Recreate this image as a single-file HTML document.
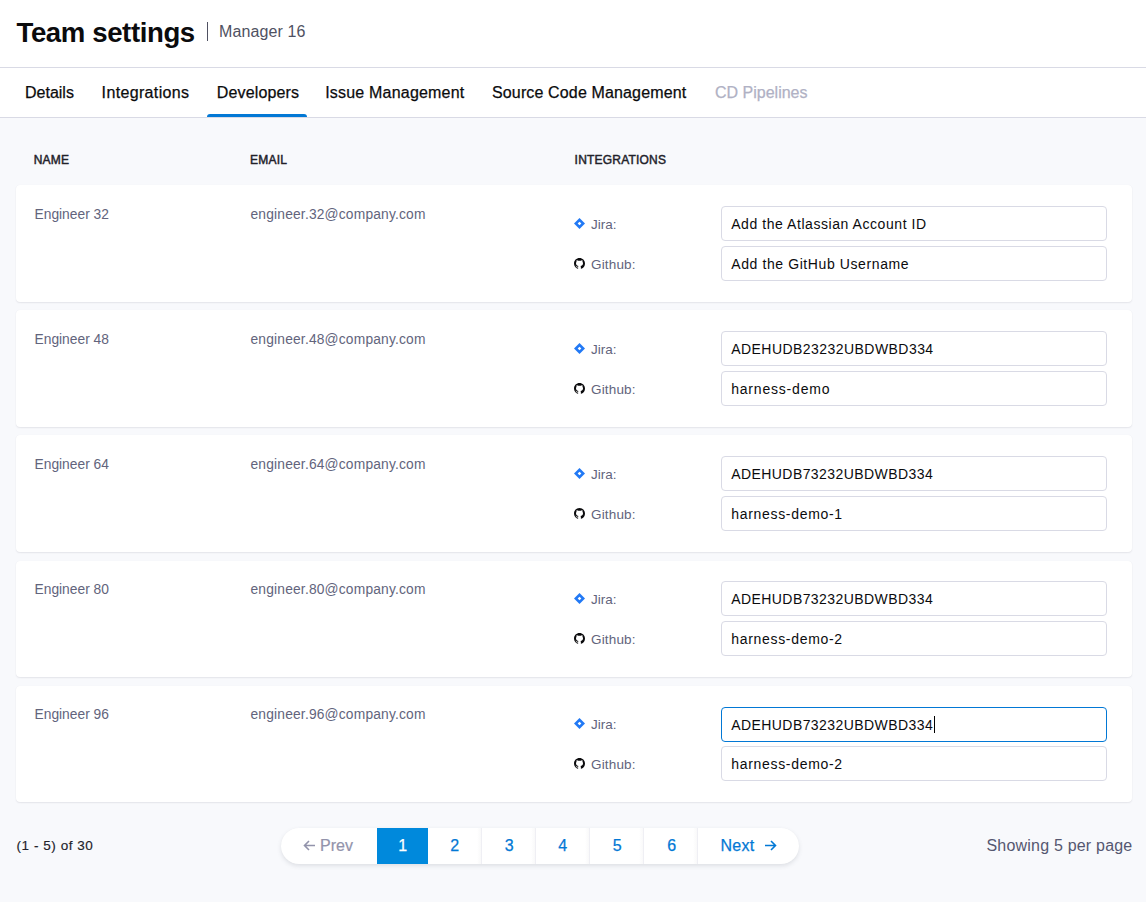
<!DOCTYPE html>
<html><head><meta charset="utf-8"><title>Team settings</title>
<style>
html,body{margin:0;padding:0;width:1146px;height:902px;overflow:hidden;background:#fff;}
body{position:relative;font-family:"Liberation Sans",sans-serif;}
.t{position:absolute;white-space:pre;}
.b{position:absolute;box-sizing:border-box;}
.card{background:#fff;border-radius:4px;box-shadow:0 0 1px rgba(40,41,61,0.06),0 1px 1.5px rgba(96,97,112,0.12);}
.inp{background:#fff;border:1px solid #d9dae5;border-radius:4px;}
.pag{background:#fff;border-radius:18px;box-shadow:0 0 1px rgba(40,41,61,0.04),0 2px 4px rgba(96,97,112,0.16);}
</style></head><body>
<div class="t" style="left:16.5px;top:18.64px;font-size:27.6px;line-height:27.6px;color:#0b0b0d;font-weight:bold;letter-spacing:-0.4px;">Team settings</div>
<div class="b" style="left:207px;top:22px;width:1px;height:19px;background:#4f5162"></div>
<div class="t" style="left:219px;top:24.46px;font-size:16px;line-height:16px;color:#4f5162;font-weight:normal;letter-spacing:0.1px;">Manager 16</div>
<div class="b" style="left:0;top:67px;width:1146px;height:1px;background:#d9dae5"></div>
<div class="b" style="left:0;top:117px;width:1146px;height:1px;background:#d9dae5"></div>
<div class="b" style="left:0;top:118px;width:1146px;height:784px;background:#f8f9fc"></div>
<div class="t" style="left:25px;top:85.46px;font-size:16px;line-height:16px;color:#0b0b0d;font-weight:normal;letter-spacing:0px;-webkit-text-stroke:0.25px #0b0b0d;">Details</div>
<div class="t" style="left:101.6px;top:85.46px;font-size:16px;line-height:16px;color:#0b0b0d;font-weight:normal;letter-spacing:0.35px;-webkit-text-stroke:0.25px #0b0b0d;">Integrations</div>
<div class="t" style="left:216.8px;top:85.46px;font-size:16px;line-height:16px;color:#0b0b0d;font-weight:normal;letter-spacing:0.15px;-webkit-text-stroke:0.25px #0b0b0d;">Developers</div>
<div class="t" style="left:325.2px;top:85.46px;font-size:16px;line-height:16px;color:#0b0b0d;font-weight:normal;letter-spacing:0.2px;-webkit-text-stroke:0.25px #0b0b0d;">Issue Management</div>
<div class="t" style="left:492px;top:85.46px;font-size:16px;line-height:16px;color:#0b0b0d;font-weight:normal;letter-spacing:0.14px;-webkit-text-stroke:0.25px #0b0b0d;">Source Code Management</div>
<div class="t" style="left:715px;top:85.46px;font-size:16px;line-height:16px;color:#b0b1c4;font-weight:normal;letter-spacing:0px;-webkit-text-stroke:0.25px #b0b1c4;">CD Pipelines</div>
<div class="b" style="left:207px;top:114px;width:100px;height:3px;background:#0278d5;border-radius:3px 3px 0 0"></div>
<div class="t" style="left:33.8px;top:153.84px;font-size:12px;line-height:12px;color:#22222a;font-weight:normal;letter-spacing:0.15px;-webkit-text-stroke:0.45px #22222a;">NAME</div>
<div class="t" style="left:250px;top:153.84px;font-size:12px;line-height:12px;color:#22222a;font-weight:normal;letter-spacing:0.25px;-webkit-text-stroke:0.45px #22222a;">EMAIL</div>
<div class="t" style="left:574.6px;top:153.84px;font-size:12px;line-height:12px;color:#22222a;font-weight:normal;letter-spacing:0.2px;-webkit-text-stroke:0.45px #22222a;">INTEGRATIONS</div>
<div class="b card" style="left:16px;top:185px;width:1116px;height:117px"></div>
<div class="t" style="left:34.5px;top:207.92px;font-size:13.8px;line-height:13.8px;color:#62647c;font-weight:normal;letter-spacing:0px;">Engineer 32</div>
<div class="t" style="left:250.5px;top:207.92px;font-size:13.8px;line-height:13.8px;color:#62647c;font-weight:normal;letter-spacing:0.18px;">engineer.32@company.com</div>
<svg class="b" style="left:574px;top:218px" width="11" height="11" viewBox="0 0 11 11"><path d="M5.5 0 L11 5.5 L5.5 11 L0 5.5Z" fill="#2279f5"/><path d="M5.5 3.7 L7.3 5.5 L5.5 7.3 L3.7 5.5Z" fill="#fff"/></svg>
<div class="t" style="left:591px;top:217.57px;font-size:13.5px;line-height:13.5px;color:#62647c;font-weight:normal;letter-spacing:0px;">Jira:</div>
<svg class="b" style="left:574px;top:258px" width="11" height="11" viewBox="0 0 16 16"><path fill="#0b0b0d" d="M8 0C3.58 0 0 3.58 0 8c0 3.54 2.29 6.53 5.47 7.59.4.07.55-.17.55-.38 0-.19-.01-.82-.01-1.49-2.01.37-2.53-.49-2.69-.94-.09-.23-.48-.94-.82-1.13-.28-.15-.68-.52-.01-.53.63-.01 1.08.58 1.23.82.72 1.21 1.87.87 2.33.66.07-.52.28-.87.51-1.07-1.78-.2-3.64-.89-3.640-3.95 0-.87.31-1.59.82-2.15-.08-.2-.36-1.02.08-2.120 0 0 .67-.21 2.2.82.64-.18 1.32-.27 2-.27.68 0 1.36.09 2 .27 1.53-1.04 2.2-.82 2.2-.82.44 1.1.16 1.92.08 2.12.51.56.82 1.27.82 2.15 0 3.07-1.87 3.75-3.65 3.95.29.25.54.73.54 1.48 0 1.07-.01 1.93-.01 2.2 0 .21.15.46.55.38A8.013 8.013 0 0016 8c0-4.42-3.58-8-8-8z"/></svg>
<div class="t" style="left:591px;top:257.57px;font-size:13.5px;line-height:13.5px;color:#62647c;font-weight:normal;letter-spacing:0.17px;">Github:</div>
<div class="b inp" style="left:721px;top:206px;width:386px;height:35px;border-color:#d9dae5"></div>
<div class="t" style="left:731.2px;top:217.15px;font-size:14px;line-height:14px;color:#0b0b0d;font-weight:normal;letter-spacing:0.56px;">Add the Atlassian Account ID</div>
<div class="b inp" style="left:721px;top:246px;width:386px;height:35px"></div>
<div class="t" style="left:731.2px;top:257.15px;font-size:14px;line-height:14px;color:#0b0b0d;font-weight:normal;letter-spacing:0.6px;">Add the GitHub Username</div>
<div class="b card" style="left:16px;top:310px;width:1116px;height:117px"></div>
<div class="t" style="left:34.5px;top:332.92px;font-size:13.8px;line-height:13.8px;color:#62647c;font-weight:normal;letter-spacing:0px;">Engineer 48</div>
<div class="t" style="left:250.5px;top:332.92px;font-size:13.8px;line-height:13.8px;color:#62647c;font-weight:normal;letter-spacing:0.18px;">engineer.48@company.com</div>
<svg class="b" style="left:574px;top:343px" width="11" height="11" viewBox="0 0 11 11"><path d="M5.5 0 L11 5.5 L5.5 11 L0 5.5Z" fill="#2279f5"/><path d="M5.5 3.7 L7.3 5.5 L5.5 7.3 L3.7 5.5Z" fill="#fff"/></svg>
<div class="t" style="left:591px;top:342.57px;font-size:13.5px;line-height:13.5px;color:#62647c;font-weight:normal;letter-spacing:0px;">Jira:</div>
<svg class="b" style="left:574px;top:383px" width="11" height="11" viewBox="0 0 16 16"><path fill="#0b0b0d" d="M8 0C3.58 0 0 3.58 0 8c0 3.54 2.29 6.53 5.47 7.59.4.07.55-.17.55-.38 0-.19-.01-.82-.01-1.49-2.01.37-2.53-.49-2.69-.94-.09-.23-.48-.94-.82-1.13-.28-.15-.68-.52-.01-.53.63-.01 1.08.58 1.23.82.72 1.21 1.87.87 2.33.66.07-.52.28-.87.51-1.07-1.78-.2-3.64-.89-3.640-3.95 0-.87.31-1.59.82-2.15-.08-.2-.36-1.02.08-2.120 0 0 .67-.21 2.2.82.64-.18 1.32-.27 2-.27.68 0 1.36.09 2 .27 1.53-1.04 2.2-.82 2.2-.82.44 1.1.16 1.92.08 2.12.51.56.82 1.27.82 2.15 0 3.07-1.87 3.75-3.65 3.95.29.25.54.73.54 1.48 0 1.07-.01 1.93-.01 2.2 0 .21.15.46.55.38A8.013 8.013 0 0016 8c0-4.42-3.58-8-8-8z"/></svg>
<div class="t" style="left:591px;top:382.57px;font-size:13.5px;line-height:13.5px;color:#62647c;font-weight:normal;letter-spacing:0.17px;">Github:</div>
<div class="b inp" style="left:721px;top:331px;width:386px;height:35px;border-color:#d9dae5"></div>
<div class="t" style="left:731.2px;top:342.15px;font-size:14px;line-height:14px;color:#0b0b0d;font-weight:normal;letter-spacing:0.45px;">ADEHUDB23232UBDWBD334</div>
<div class="b inp" style="left:721px;top:371px;width:386px;height:35px"></div>
<div class="t" style="left:731.2px;top:382.15px;font-size:14px;line-height:14px;color:#0b0b0d;font-weight:normal;letter-spacing:0.8px;">harness-demo</div>
<div class="b card" style="left:16px;top:435px;width:1116px;height:117px"></div>
<div class="t" style="left:34.5px;top:457.92px;font-size:13.8px;line-height:13.8px;color:#62647c;font-weight:normal;letter-spacing:0px;">Engineer 64</div>
<div class="t" style="left:250.5px;top:457.92px;font-size:13.8px;line-height:13.8px;color:#62647c;font-weight:normal;letter-spacing:0.18px;">engineer.64@company.com</div>
<svg class="b" style="left:574px;top:468px" width="11" height="11" viewBox="0 0 11 11"><path d="M5.5 0 L11 5.5 L5.5 11 L0 5.5Z" fill="#2279f5"/><path d="M5.5 3.7 L7.3 5.5 L5.5 7.3 L3.7 5.5Z" fill="#fff"/></svg>
<div class="t" style="left:591px;top:467.57px;font-size:13.5px;line-height:13.5px;color:#62647c;font-weight:normal;letter-spacing:0px;">Jira:</div>
<svg class="b" style="left:574px;top:508px" width="11" height="11" viewBox="0 0 16 16"><path fill="#0b0b0d" d="M8 0C3.58 0 0 3.58 0 8c0 3.54 2.29 6.53 5.47 7.59.4.07.55-.17.55-.38 0-.19-.01-.82-.01-1.49-2.01.37-2.53-.49-2.69-.94-.09-.23-.48-.94-.82-1.13-.28-.15-.68-.52-.01-.53.63-.01 1.08.58 1.23.82.72 1.21 1.87.87 2.33.66.07-.52.28-.87.51-1.07-1.78-.2-3.64-.89-3.640-3.95 0-.87.31-1.59.82-2.15-.08-.2-.36-1.02.08-2.120 0 0 .67-.21 2.2.82.64-.18 1.32-.27 2-.27.68 0 1.36.09 2 .27 1.53-1.04 2.2-.82 2.2-.82.44 1.1.16 1.92.08 2.12.51.56.82 1.27.82 2.15 0 3.07-1.87 3.75-3.65 3.95.29.25.54.73.54 1.48 0 1.07-.01 1.93-.01 2.2 0 .21.15.46.55.38A8.013 8.013 0 0016 8c0-4.42-3.58-8-8-8z"/></svg>
<div class="t" style="left:591px;top:507.57px;font-size:13.5px;line-height:13.5px;color:#62647c;font-weight:normal;letter-spacing:0.17px;">Github:</div>
<div class="b inp" style="left:721px;top:456px;width:386px;height:35px;border-color:#d9dae5"></div>
<div class="t" style="left:731.2px;top:467.15px;font-size:14px;line-height:14px;color:#0b0b0d;font-weight:normal;letter-spacing:0.43px;">ADEHUDB73232UBDWBD334</div>
<div class="b inp" style="left:721px;top:496px;width:386px;height:35px"></div>
<div class="t" style="left:731.2px;top:507.15px;font-size:14px;line-height:14px;color:#0b0b0d;font-weight:normal;letter-spacing:0.69px;">harness-demo-1</div>
<div class="b card" style="left:16px;top:561px;width:1116px;height:116px"></div>
<div class="t" style="left:34.5px;top:582.92px;font-size:13.8px;line-height:13.8px;color:#62647c;font-weight:normal;letter-spacing:0px;">Engineer 80</div>
<div class="t" style="left:250.5px;top:582.92px;font-size:13.8px;line-height:13.8px;color:#62647c;font-weight:normal;letter-spacing:0.18px;">engineer.80@company.com</div>
<svg class="b" style="left:574px;top:593px" width="11" height="11" viewBox="0 0 11 11"><path d="M5.5 0 L11 5.5 L5.5 11 L0 5.5Z" fill="#2279f5"/><path d="M5.5 3.7 L7.3 5.5 L5.5 7.3 L3.7 5.5Z" fill="#fff"/></svg>
<div class="t" style="left:591px;top:592.57px;font-size:13.5px;line-height:13.5px;color:#62647c;font-weight:normal;letter-spacing:0px;">Jira:</div>
<svg class="b" style="left:574px;top:633px" width="11" height="11" viewBox="0 0 16 16"><path fill="#0b0b0d" d="M8 0C3.58 0 0 3.58 0 8c0 3.54 2.29 6.53 5.47 7.59.4.07.55-.17.55-.38 0-.19-.01-.82-.01-1.49-2.01.37-2.53-.49-2.69-.94-.09-.23-.48-.94-.82-1.13-.28-.15-.68-.52-.01-.53.63-.01 1.08.58 1.23.82.72 1.21 1.87.87 2.33.66.07-.52.28-.87.51-1.07-1.78-.2-3.64-.89-3.640-3.95 0-.87.31-1.59.82-2.15-.08-.2-.36-1.02.08-2.120 0 0 .67-.21 2.2.82.64-.18 1.32-.27 2-.27.68 0 1.36.09 2 .27 1.53-1.04 2.2-.82 2.2-.82.44 1.1.16 1.92.08 2.12.51.56.82 1.27.82 2.15 0 3.07-1.87 3.75-3.65 3.95.29.25.54.73.54 1.48 0 1.07-.01 1.93-.01 2.2 0 .21.15.46.55.38A8.013 8.013 0 0016 8c0-4.42-3.58-8-8-8z"/></svg>
<div class="t" style="left:591px;top:632.57px;font-size:13.5px;line-height:13.5px;color:#62647c;font-weight:normal;letter-spacing:0.17px;">Github:</div>
<div class="b inp" style="left:721px;top:581px;width:386px;height:35px;border-color:#d9dae5"></div>
<div class="t" style="left:731.2px;top:592.15px;font-size:14px;line-height:14px;color:#0b0b0d;font-weight:normal;letter-spacing:0.43px;">ADEHUDB73232UBDWBD334</div>
<div class="b inp" style="left:721px;top:621px;width:386px;height:35px"></div>
<div class="t" style="left:731.2px;top:632.15px;font-size:14px;line-height:14px;color:#0b0b0d;font-weight:normal;letter-spacing:0.69px;">harness-demo-2</div>
<div class="b card" style="left:16px;top:686px;width:1116px;height:116px"></div>
<div class="t" style="left:34.5px;top:707.92px;font-size:13.8px;line-height:13.8px;color:#62647c;font-weight:normal;letter-spacing:0px;">Engineer 96</div>
<div class="t" style="left:250.5px;top:707.92px;font-size:13.8px;line-height:13.8px;color:#62647c;font-weight:normal;letter-spacing:0.18px;">engineer.96@company.com</div>
<svg class="b" style="left:574px;top:718px" width="11" height="11" viewBox="0 0 11 11"><path d="M5.5 0 L11 5.5 L5.5 11 L0 5.5Z" fill="#2279f5"/><path d="M5.5 3.7 L7.3 5.5 L5.5 7.3 L3.7 5.5Z" fill="#fff"/></svg>
<div class="t" style="left:591px;top:717.57px;font-size:13.5px;line-height:13.5px;color:#62647c;font-weight:normal;letter-spacing:0px;">Jira:</div>
<svg class="b" style="left:574px;top:758px" width="11" height="11" viewBox="0 0 16 16"><path fill="#0b0b0d" d="M8 0C3.58 0 0 3.58 0 8c0 3.54 2.29 6.53 5.47 7.59.4.07.55-.17.55-.38 0-.19-.01-.82-.01-1.49-2.01.37-2.53-.49-2.69-.94-.09-.23-.48-.94-.82-1.13-.28-.15-.68-.52-.01-.53.63-.01 1.08.58 1.23.82.72 1.21 1.87.87 2.33.66.07-.52.28-.87.51-1.07-1.78-.2-3.64-.89-3.640-3.95 0-.87.31-1.59.82-2.15-.08-.2-.36-1.02.08-2.120 0 0 .67-.21 2.2.82.64-.18 1.32-.27 2-.27.68 0 1.36.09 2 .27 1.53-1.04 2.2-.82 2.2-.82.44 1.1.16 1.92.08 2.12.51.56.82 1.27.82 2.15 0 3.07-1.87 3.75-3.65 3.95.29.25.54.73.54 1.48 0 1.07-.01 1.93-.01 2.2 0 .21.15.46.55.38A8.013 8.013 0 0016 8c0-4.42-3.58-8-8-8z"/></svg>
<div class="t" style="left:591px;top:757.57px;font-size:13.5px;line-height:13.5px;color:#62647c;font-weight:normal;letter-spacing:0.17px;">Github:</div>
<div class="b inp" style="left:721px;top:707px;width:386px;height:35px;border-color:#0278d5"></div>
<div class="t" style="left:731.2px;top:718.15px;font-size:14px;line-height:14px;color:#0b0b0d;font-weight:normal;letter-spacing:0.43px;">ADEHUDB73232UBDWBD334</div>
<div class="b inp" style="left:721px;top:746px;width:386px;height:35px"></div>
<div class="t" style="left:731.2px;top:757.15px;font-size:14px;line-height:14px;color:#0b0b0d;font-weight:normal;letter-spacing:0.69px;">harness-demo-2</div>
<div class="b" style="left:934px;top:716px;width:1px;height:17px;background:#000"></div>
<div class="t" style="left:16.5px;top:838.57px;font-size:13.5px;line-height:13.5px;color:#22222a;font-weight:normal;letter-spacing:0.55px;-webkit-text-stroke:0.15px #22222a;">(1 - 5) of 30</div>
<div class="b pag" style="left:281px;top:828px;width:518px;height:36px"></div>
<div class="b" style="left:377px;top:828px;width:51px;height:36px;background:#0089dc"></div>
<div class="b" style="left:477px;top:828px;width:4px;height:36px;background:linear-gradient(to right,rgba(96,97,112,0),rgba(96,97,112,0.04))"></div>
<div class="b" style="left:481px;top:828px;width:1px;height:36px;background:#efeff4"></div>
<div class="b" style="left:531px;top:828px;width:4px;height:36px;background:linear-gradient(to right,rgba(96,97,112,0),rgba(96,97,112,0.04))"></div>
<div class="b" style="left:535px;top:828px;width:1px;height:36px;background:#efeff4"></div>
<div class="b" style="left:585px;top:828px;width:4px;height:36px;background:linear-gradient(to right,rgba(96,97,112,0),rgba(96,97,112,0.04))"></div>
<div class="b" style="left:589px;top:828px;width:1px;height:36px;background:#efeff4"></div>
<div class="b" style="left:639px;top:828px;width:4px;height:36px;background:linear-gradient(to right,rgba(96,97,112,0),rgba(96,97,112,0.04))"></div>
<div class="b" style="left:643px;top:828px;width:1px;height:36px;background:#efeff4"></div>
<div class="b" style="left:693px;top:828px;width:4px;height:36px;background:linear-gradient(to right,rgba(96,97,112,0),rgba(96,97,112,0.04))"></div>
<div class="b" style="left:697px;top:828px;width:1px;height:36px;background:#efeff4"></div>
<svg class="b" style="left:303px;top:840px" width="13" height="11" viewBox="0 0 13 11"><path d="M12 5.5H1.5M6 1L1.5 5.5L6 10" stroke="#9293ab" stroke-width="1.6" fill="none"/></svg>
<div class="t" style="left:320.0px;top:837.76px;font-size:16px;line-height:16px;color:#9293ab;font-weight:normal;letter-spacing:0px;-webkit-text-stroke:0.2px #9293ab;">Prev</div>
<div class="t" style="left:398.3px;top:837.76px;font-size:16px;line-height:16px;color:#ffffff;font-weight:normal;letter-spacing:0px;-webkit-text-stroke:0.25px #fff;">1</div>
<div class="t" style="left:450.3px;top:837.76px;font-size:16px;line-height:16px;color:#0278d5;font-weight:normal;letter-spacing:0px;-webkit-text-stroke:0.25px #0278d5;">2</div>
<div class="t" style="left:504.8px;top:837.76px;font-size:16px;line-height:16px;color:#0278d5;font-weight:normal;letter-spacing:0px;-webkit-text-stroke:0.25px #0278d5;">3</div>
<div class="t" style="left:558.3px;top:837.76px;font-size:16px;line-height:16px;color:#0278d5;font-weight:normal;letter-spacing:0px;-webkit-text-stroke:0.25px #0278d5;">4</div>
<div class="t" style="left:612.8px;top:837.76px;font-size:16px;line-height:16px;color:#0278d5;font-weight:normal;letter-spacing:0px;-webkit-text-stroke:0.25px #0278d5;">5</div>
<div class="t" style="left:667.3px;top:837.76px;font-size:16px;line-height:16px;color:#0278d5;font-weight:normal;letter-spacing:0px;-webkit-text-stroke:0.25px #0278d5;">6</div>
<div class="t" style="left:720.6px;top:837.76px;font-size:16px;line-height:16px;color:#0278d5;font-weight:normal;letter-spacing:0.2px;-webkit-text-stroke:0.25px #0278d5;">Next</div>
<svg class="b" style="left:764px;top:840px" width="13" height="11" viewBox="0 0 13 11"><path d="M1 5.5H11.5M7 1L11.5 5.5L7 10" stroke="#0278d5" stroke-width="1.6" fill="none"/></svg>
<div class="t" style="left:986.5px;top:838.46px;font-size:16px;line-height:16px;color:#555770;font-weight:normal;letter-spacing:0.2px;">Showing 5 per page</div>
</body></html>
